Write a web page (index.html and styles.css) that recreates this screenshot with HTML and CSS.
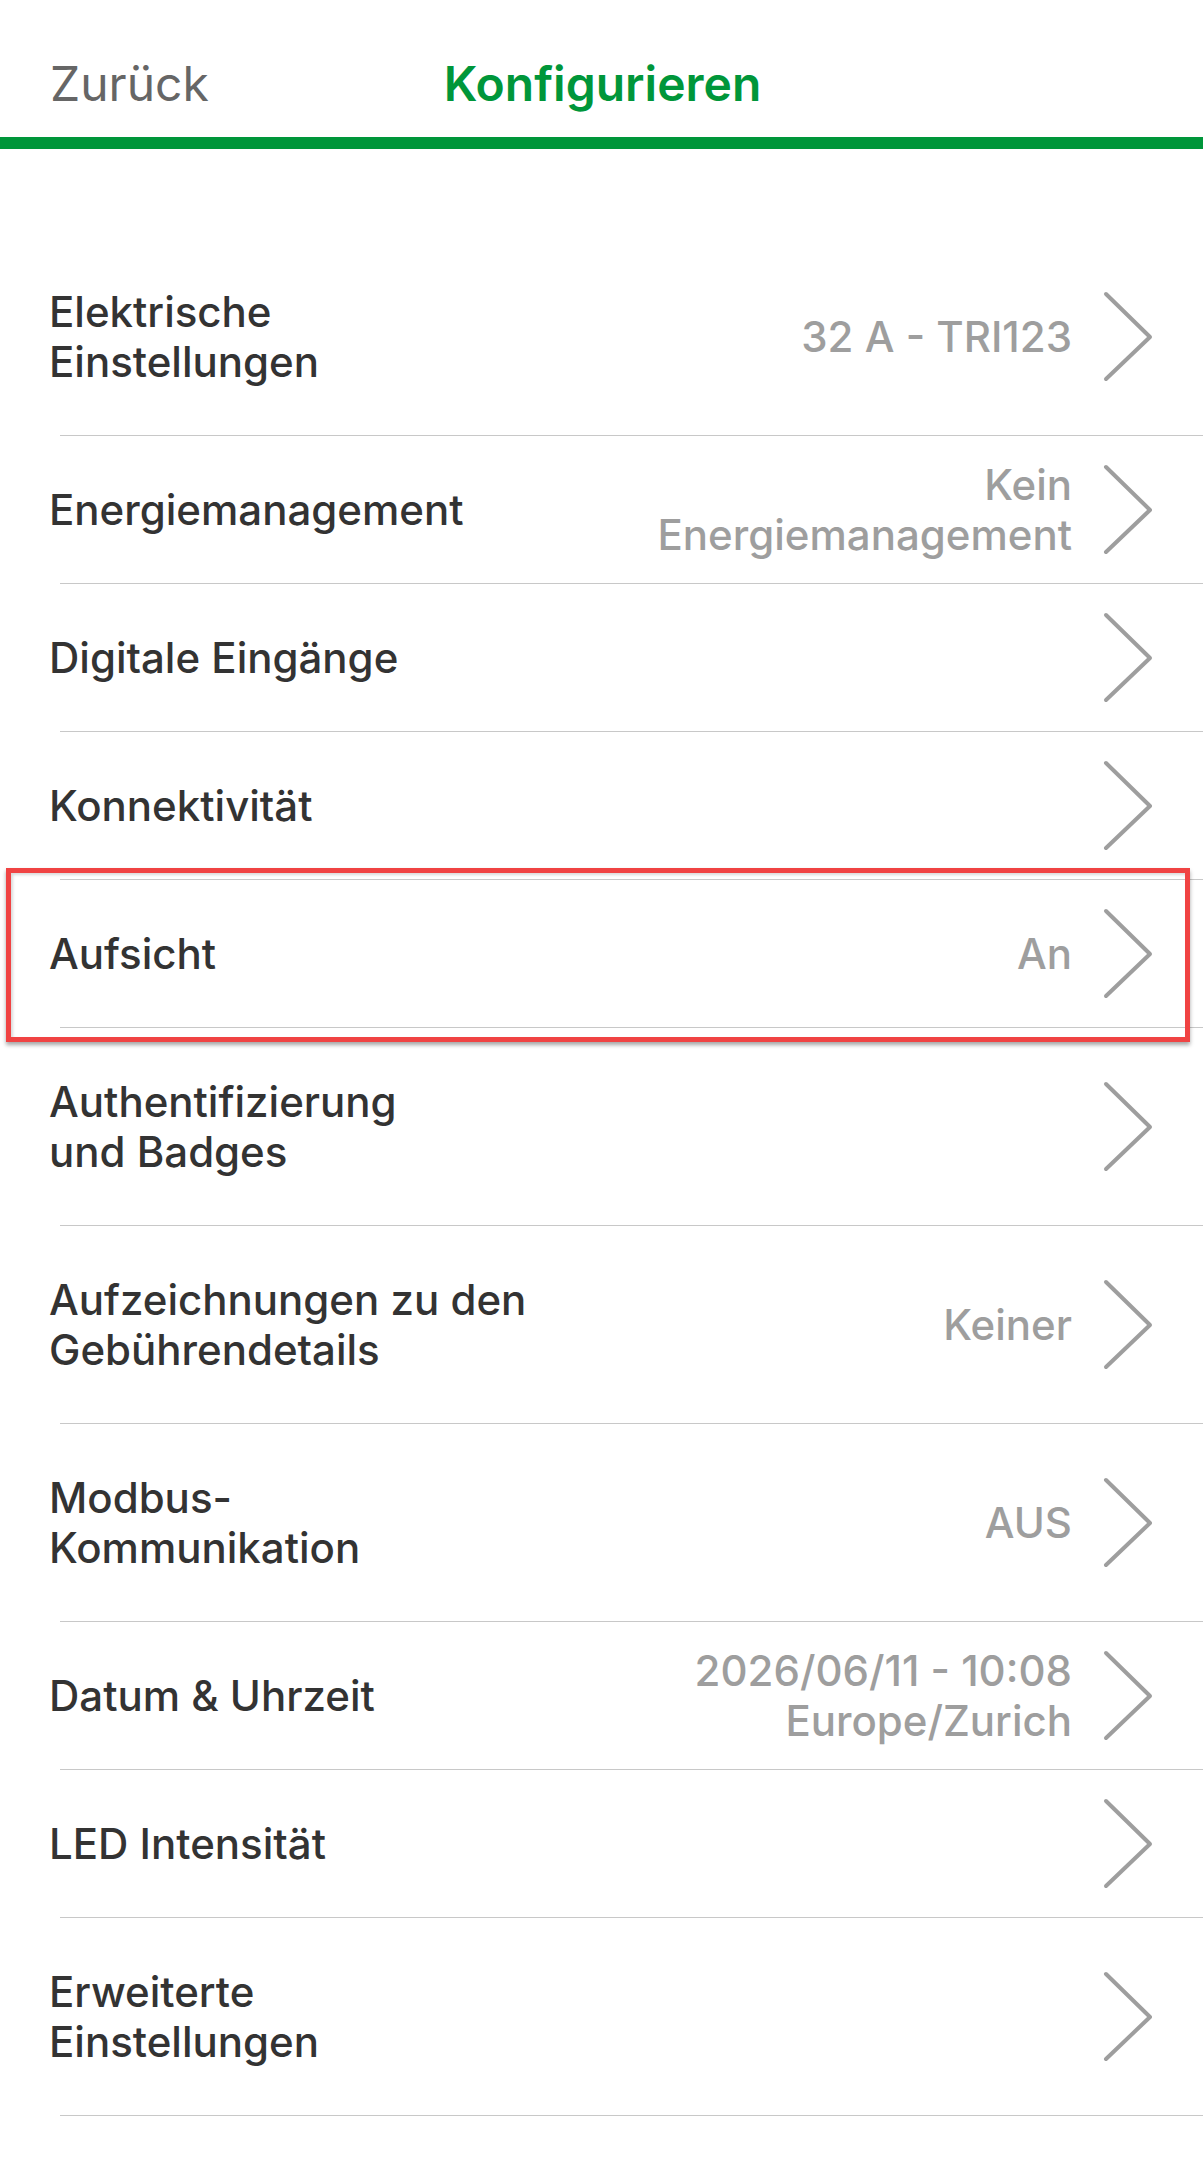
FILE: index.html
```html
<!DOCTYPE html>
<html lang="de">
<head>
    <meta charset="UTF-8">
    <meta name="viewport" content="width=device-width, initial-scale=1.0">
    <title>Konfigurieren</title>
    <link rel="stylesheet" href="styles.css">
</head>
<body>

<header class="topbar">
    <a class="back" href="#">Zurück</a>
    <h1 class="title">Konfigurieren</h1>
    <span></span>
</header>

<ul class="settings">
    <li class="row">
        <span class="label">Elektrische<br>Einstellungen</span>
        <span class="value">32 A - TRI123</span>
        <svg class="chevron" viewBox="0 0 52 95"><polyline points="4,5 48,48 4,90"/></svg>
    </li>
    <li class="row">
        <span class="label">Energiemanagement</span>
        <span class="value">Kein<br>Energiemanagement</span>
        <svg class="chevron" viewBox="0 0 52 95"><polyline points="4,5 48,48 4,90"/></svg>
    </li>
    <li class="row">
        <span class="label">Digitale Eingänge</span>
        <svg class="chevron" viewBox="0 0 52 95"><polyline points="4,5 48,48 4,90"/></svg>
    </li>
    <li class="row">
        <span class="label">Konnektivität</span>
        <svg class="chevron" viewBox="0 0 52 95"><polyline points="4,5 48,48 4,90"/></svg>
    </li>
    <li class="row highlighted">
        <span class="label">Aufsicht</span>
        <span class="value">An</span>
        <svg class="chevron" viewBox="0 0 52 95"><polyline points="4,5 48,48 4,90"/></svg>
    </li>
    <li class="row">
        <span class="label">Authentifizierung<br>und Badges</span>
        <svg class="chevron" viewBox="0 0 52 95"><polyline points="4,5 48,48 4,90"/></svg>
    </li>
    <li class="row">
        <span class="label">Aufzeichnungen zu den<br>Gebührendetails</span>
        <span class="value">Keiner</span>
        <svg class="chevron" viewBox="0 0 52 95"><polyline points="4,5 48,48 4,90"/></svg>
    </li>
    <li class="row">
        <span class="label">Modbus-<br>Kommunikation</span>
        <span class="value">AUS</span>
        <svg class="chevron" viewBox="0 0 52 95"><polyline points="4,5 48,48 4,90"/></svg>
    </li>
    <li class="row">
        <span class="label">Datum &amp; Uhrzeit</span>
        <span class="value">2026/06/11 - 10:08<br>Europe/Zurich</span>
        <svg class="chevron" viewBox="0 0 52 95"><polyline points="4,5 48,48 4,90"/></svg>
    </li>
    <li class="row">
        <span class="label">LED Intensität</span>
        <svg class="chevron" viewBox="0 0 52 95"><polyline points="4,5 48,48 4,90"/></svg>
    </li>
    <li class="row">
        <span class="label">Erweiterte<br>Einstellungen</span>
        <svg class="chevron" viewBox="0 0 52 95"><polyline points="4,5 48,48 4,90"/></svg>
    </li>
</ul>

</body>
</html>
```

FILE: styles.css
```css
body {
    font-family: Inter, "Noto Sans", sans-serif;
    margin: 0;
    padding: 0;
    background-color: #fff;
}
/* top bar with back link and centered title */
.topbar {
    display: grid;
    grid-template-columns: 1fr auto 1fr;
    align-items: start;
    height: 81px;
    padding: 56px 0 0 50px;
    border-bottom: 12px solid #00963a;
}
.back {
    color: #666;
    font-size: 48px;
    line-height: 56px;
    text-decoration: none;
}
.title {
    margin: 0;
    margin-left: -48px;
    color: #00963a;
    font-size: 48px;
    font-weight: 600;
    line-height: 56px;
}
.settings {
    list-style-type: none;
    margin: 0;
    padding: 89px 0 0 0;
}
.row {
    position: relative;
    display: flex;
    align-items: center;
    margin-left: 60px;
    padding-right: 49px;
    border-bottom: 1px solid #c8c8c8;
}
.label {
    flex: 1 1 auto;
    margin-left: -11px;
    padding: 49px 0 48px 0;
    color: #333;
    font-size: 42px;
    font-weight: 500;
    line-height: 50px;
}
.value {
    color: #9e9e9e;
    font-size: 42px;
    font-weight: 500;
    line-height: 50px;
    text-align: right;
    white-space: nowrap;
}
.chevron {
    flex: none;
    width: 52px;
    height: 95px;
    margin-left: 30px;
}
.chevron polyline {
    fill: none;
    stroke: #9e9e9e;
    stroke-width: 4;
    stroke-linecap: round;
    stroke-linejoin: round;
}
/* red marker box around one row */
.highlighted::after {
    content: "";
    position: absolute;
    top: -12px;
    left: -54px;
    right: 13px;
    bottom: -15px;
    border: 5px solid #f04343;
    box-shadow: 0 3px 4px rgba(0, 0, 0, 0.35), inset 2px 2px 3px rgba(0, 0, 0, 0.15);
    pointer-events: none;
}
```
